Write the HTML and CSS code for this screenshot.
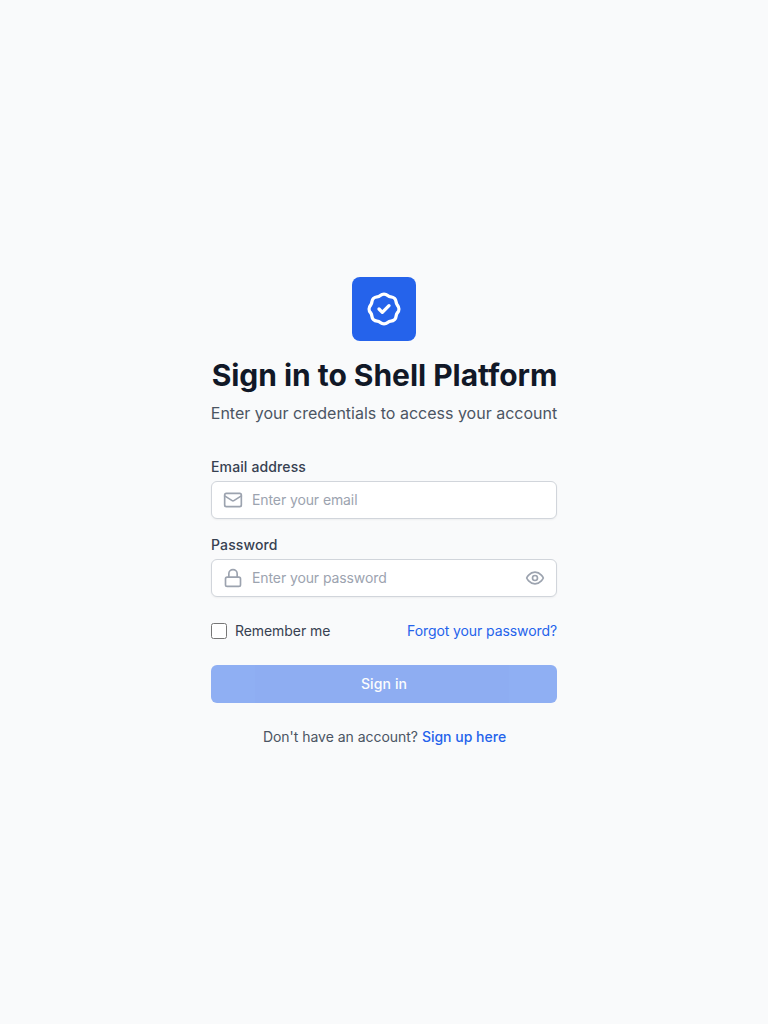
FILE: index.html
```html
<!DOCTYPE html>
<html lang="en">
<head>
<meta charset="UTF-8">
<meta name="viewport" content="width=device-width, initial-scale=1">
<title>Sign in to Shell Platform</title>
<link rel="stylesheet" href="styles.css">
</head>
<body>
<main class="login">
  <header class="intro">
    <div class="logo">
      <svg viewBox="0 0 24 24"><path d="M9 12l2 2 4-4M7.835 4.697a3.42 3.42 0 001.946-.806 3.42 3.42 0 014.438 0 3.42 3.42 0 001.946.806 3.42 3.42 0 013.138 3.138 3.42 3.42 0 00.806 1.946 3.42 3.42 0 010 4.438 3.42 3.42 0 00-.806 1.946 3.42 3.42 0 01-3.138 3.138 3.42 3.42 0 00-1.946.806 3.42 3.42 0 01-4.438 0 3.42 3.42 0 00-1.946-.806 3.42 3.42 0 01-3.138-3.138 3.42 3.42 0 00-.806-1.946 3.42 3.42 0 010-4.438 3.42 3.42 0 00.806-1.946 3.42 3.42 0 013.138-3.138z"/></svg>
    </div>
    <h1 class="title">Sign in to Shell Platform</h1>
    <p class="subtitle">Enter your credentials to access your account</p>
  </header>
  <form class="form">
    <div class="fields">
      <div class="field">
        <label class="label" for="email">Email address</label>
        <div class="control">
          <svg class="icon" viewBox="0 0 24 24"><rect x="2" y="4" width="20" height="16" rx="2"/><path d="m22 7-8.97 5.7a1.94 1.94 0 0 1-2.06 0L2 7"/></svg>
          <input class="input" id="email" type="email" placeholder="Enter your email">
        </div>
      </div>
      <div class="field">
        <label class="label" for="password">Password</label>
        <div class="control">
          <svg class="icon" viewBox="0 0 24 24"><rect x="3" y="11" width="18" height="11" rx="2"/><path d="M7 11V7a5 5 0 0 1 10 0v4"/></svg>
          <input class="input" id="password" type="password" placeholder="Enter your password">
          <svg class="icon" viewBox="0 0 24 24"><path d="M2 12s3-7 10-7 10 7 10 7-3 7-10 7-10-7-10-7Z"/><circle cx="12" cy="12" r="3"/></svg>
        </div>
      </div>
    </div>
    <div class="options">
      <label class="remember"><input class="checkbox" type="checkbox">Remember me</label>
      <a class="link forgot" href="#">Forgot your password?</a>
    </div>
    <button class="submit" type="submit" disabled>Sign in</button>
    <p class="signup">Don't have an account? <a class="link link-strong" href="#">Sign up here</a></p>
  </form>
</main>
</body>
</html>
```

FILE: styles.css
```css
* { box-sizing: border-box; margin: 0; padding: 0; }
body {
  min-height: 100vh;
  display: flex;
  align-items: center;
  justify-content: center;
  background: #f9fafb;
  color: #111827;
  font-family: Inter, "Liberation Sans", sans-serif;
  font-size: 14px;
  line-height: 20px;
}
svg { fill: none; stroke: currentColor; stroke-width: 2; stroke-linecap: round; stroke-linejoin: round; }
.login { width: 346px; }
.intro { display: flex; flex-direction: column; align-items: center; white-space: nowrap; }
.logo {
  display: flex;
  align-items: center;
  justify-content: center;
  width: 64px;
  height: 64px;
  margin-bottom: 16px;
  border-radius: 8px;
  background: #2563eb;
  color: #fff;
}
.logo svg { width: 40px; height: 40px; }
.title { padding-left: 1px; font-size: 30px; line-height: 36px; font-weight: 700; letter-spacing: -0.04px; }
.subtitle { margin-top: 8px; font-size: 16px; line-height: 24px; color: #4b5563; }
.form { margin-top: 32px; display: flex; flex-direction: column; gap: 24px; }
.fields { display: flex; flex-direction: column; gap: 16px; }
.label { display: block; margin-bottom: 4px; font-weight: 500; letter-spacing: 0.13px; color: #374151; }
.control {
  display: flex;
  align-items: center;
  gap: 9px;
  height: 38px;
  padding: 0 11px;
  border: 1px solid #d1d5db;
  border-radius: 6px;
  background: #fff;
  box-shadow: 0 1px 2px rgba(0, 0, 0, 0.05);
}
.icon { flex: none; width: 20px; height: 20px; color: #9ca3af; }
.input { flex: 1; min-width: 0; border: 0; outline: 0; background: none; font: inherit; letter-spacing: -0.1px; }
.input::placeholder { color: #9ca3af; }
.options { display: flex; align-items: center; justify-content: space-between; }
.remember { display: flex; align-items: center; gap: 8px; letter-spacing: -0.07px; color: #374151; }
.checkbox { width: 16px; height: 16px; }
.link { color: #2563eb; text-decoration: none; }
.link-strong { font-weight: 500; letter-spacing: 0; }
.forgot { letter-spacing: -0.09px; }
.submit {
  height: 38px;
  border: 0;
  border-radius: 6px;
  background: #2563eb;
  color: #fff;
  font: inherit;
  font-weight: 500;
  letter-spacing: 0.12px;
  opacity: 0.5;
}
.signup { padding-left: 1px; text-align: center; letter-spacing: -0.03px; color: #4b5563; }
```
